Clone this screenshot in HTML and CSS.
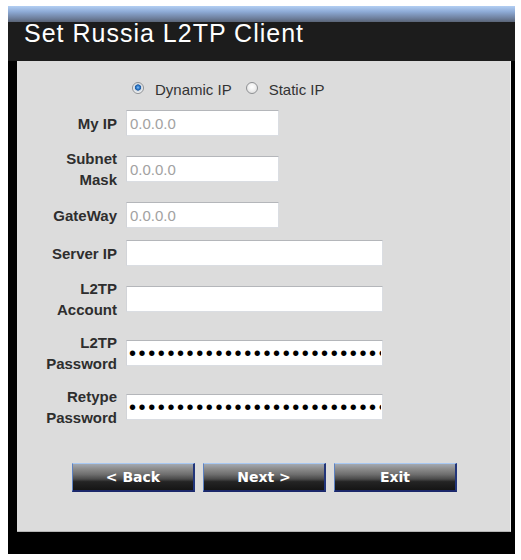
FILE: index.html
```html
<!DOCTYPE html>
<html>
<head>
<meta charset="utf-8">
<title>Set Russia L2TP Client</title>
<link rel="stylesheet" href="styles.css">
</head>
<body>
<div class="frame">
  <div class="frame-bar"></div>
  <h1 class="title">Set Russia L2TP Client</h1>
  <div class="panel">
    <div class="mode">
      <label class="opt"><input class="radio" type="radio" name="mode" checked><span>Dynamic IP</span></label>
      <label class="opt"><input class="radio" type="radio" name="mode"><span>Static IP</span></label>
    </div>
    <div class="fields">
      <div class="row"><label class="lbl">My IP</label><input class="box short ip" type="text" value="0.0.0.0"></div>
      <div class="row"><label class="lbl">Subnet<br>Mask</label><input class="box short ip" type="text" value="0.0.0.0"></div>
      <div class="row"><label class="lbl">GateWay</label><input class="box short ip" type="text" value="0.0.0.0"></div>
      <div class="row"><label class="lbl">Server IP</label><input class="box wide" type="text" value=""></div>
      <div class="row"><label class="lbl">L2TP<br>Account</label><input class="box wide" type="text" value=""></div>
      <div class="row"><label class="lbl">L2TP<br>Password</label><input class="box wide pw" type="password" value="abcdefghijklmnopqrstuvwxyz0123456"></div>
      <div class="row"><label class="lbl">Retype<br>Password</label><input class="box wide pw" type="password" value="abcdefghijklmnopqrstuvwxyz0123456"></div>
    </div>
    <div class="actions">
      <button class="btn" type="button">&lt; Back</button>
      <button class="btn" type="button">Next &gt;</button>
      <button class="btn" type="button">Exit</button>
    </div>
  </div>
</div>
</body>
</html>
```
FILE: styles.css
```css
html, body {
  margin: 0;
  padding: 0;
  background: #ffffff;
}

body {
  font-family: "Liberation Sans", Arial, sans-serif;
}

.frame {
  margin: 6px 0 0 8px;
  width: 507px;
  height: 548px;
  background: #000000;
  display: flex;
  flex-direction: column;
}

.frame-bar {
  height: 16px;
  background: linear-gradient(to bottom, #b3cff3 0%, #8eabd6 35%, #6f819f 75%, #5a6476 100%);
}

.title {
  margin: 0;
  height: 39px;
  background: #1c1c1c;
  color: #ffffff;
  font-weight: normal;
  font-size: 25px;
  line-height: 23px;
  letter-spacing: 1px;
  padding-left: 16px;
}

.panel {
  margin: 0 4px 0 9px;
  height: 471px;
  box-sizing: border-box;
  background: #dcdcdc;
  border-right: 1px solid #eeeeee;
  border-bottom: 1px solid #b5b5b5;
  padding-top: 19px;
}

.mode {
  display: flex;
  height: 21px;
  padding-left: 115px;
  gap: 14px;
}

.opt {
  display: flex;
  align-items: flex-start;
  gap: 11px;
  font-size: 15px;
  line-height: 19px;
  color: #333333;
}

.radio {
  -webkit-appearance: none;
  appearance: none;
  margin: 2px 0 0 0;
  width: 12px;
  height: 12px;
  box-sizing: border-box;
  border: 1px solid #8f9194;
  border-radius: 50%;
  background: radial-gradient(circle at 50% 40%, #ffffff 0, #f2f2f2 40%, #d5d5d5 100%);
}

.radio:checked {
  background: radial-gradient(circle at 50% 45%, #8cc2f2 0, #2f7ccf 1.6px, #1d5aa0 2.8px, #cfd6de 3.4px, #eef1f4 5px);
}

.fields {
  margin-top: 9px;
  display: flex;
  flex-direction: column;
  gap: 12px;
}

.row {
  display: grid;
  grid-template-columns: 100px auto;
  column-gap: 9px;
  align-items: center;
  justify-content: start;
}

.lbl {
  text-align: right;
  font-weight: bold;
  font-size: 15px;
  line-height: 21px;
  color: #2e2e2e;
}

.box {
  box-sizing: border-box;
  height: 26px;
  margin: 0;
  padding: 0 1px 0 3px;
  background: #ffffff;
  border: 1px solid #dadde2;
  border-top-color: #b4b6ba;
  border-left-color: #d2d4d8;
  font-family: "Liberation Sans", Arial, sans-serif;
  font-size: 15px;
  color: #a2a2a2;
  outline: none;
}

.short {
  width: 153px;
}

.wide {
  width: 257px;
}

.pw {
  color: #000000;
  font-size: 20px;
  letter-spacing: 2.6px;
  padding-left: 2px;
}

.actions {
  margin-top: 35px;
  padding-left: 55px;
  display: flex;
  gap: 8px;
}

.btn {
  box-sizing: border-box;
  width: 123px;
  height: 29px;
  margin: 0;
  padding: 0 0 1px 0;
  border-style: solid;
  border-width: 1px 2px 2px 1px;
  border-color: #a8c8f2 #22357a #1b276a #5d82c2;
  background: linear-gradient(to bottom, #a3a9b2 0%, #8d8d8d 18%, #6e6e6e 40%, #4a4a4a 58%, #242424 68%, #151515 100%);
  color: #ffffff;
  font-family: "DejaVu Sans", Verdana, sans-serif;
  font-weight: bold;
  font-size: 14px;
  line-height: 24px;
  text-align: center;
}
```
